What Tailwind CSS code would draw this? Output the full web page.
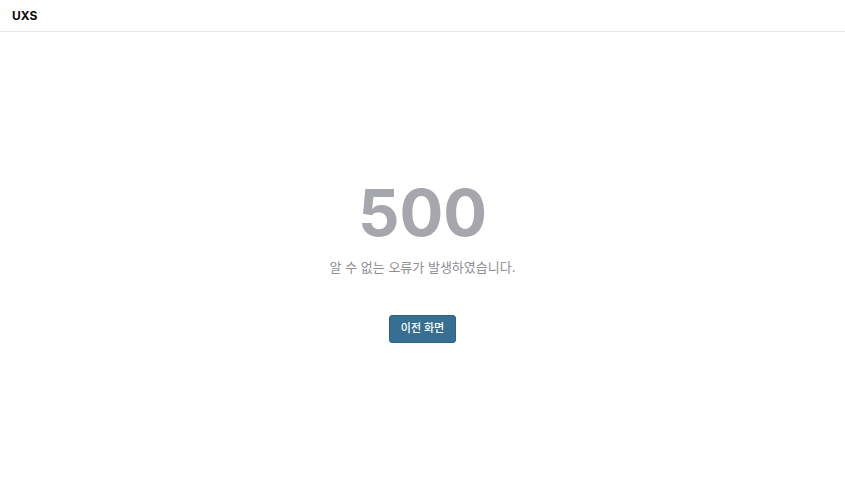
<!DOCTYPE html>
<html lang="ko">
<head>
<meta charset="utf-8">
<meta name="viewport" content="width=device-width, initial-scale=1">
<title>UXS</title>
<script src="https://cdn.jsdelivr.net/npm/@tailwindcss/browser@4"></script>
</head>
<body class="flex min-h-screen flex-col bg-white font-[Inter,'Noto_Sans_CJK_KR',sans-serif]">
<header class="flex h-8 items-center border-b border-[#e8e8ea] px-3">
<a href="#" class="text-xs font-bold text-zinc-950">UXS</a>
</header>
<main class="flex flex-1 flex-col items-center justify-center">
<h1 class="text-[65px] leading-14 font-bold text-[#a6a6ad]">500</h1>
<p class="mt-4 text-[13px] leading-5 text-[#8e8e93]">알 수 없는 오류가 발생하였습니다.</p>
<button type="button" class="mt-[38px] h-7 rounded-[3px] border border-[#2b6589] bg-[#376f92] px-[11px] text-[11px] font-medium text-white">이전 화면</button>
</main>
</body>
</html>
